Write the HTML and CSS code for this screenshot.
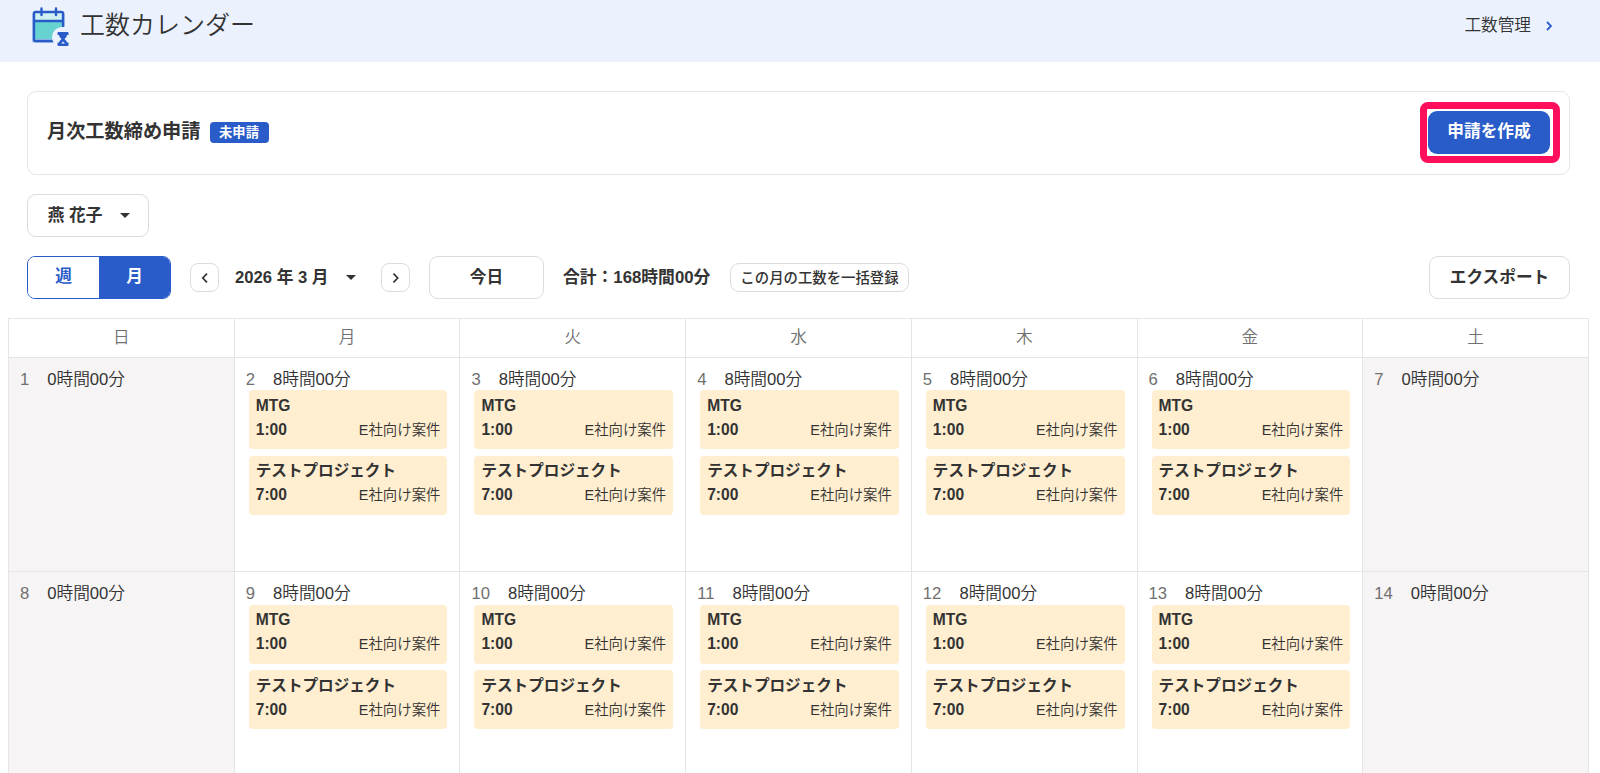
FILE: index.html
```
<!DOCTYPE html>
<html lang="ja">
<head>
    <meta charset="UTF-8">
    <title>工数カレンダー</title>
    <link rel="stylesheet" href="styles.css">
</head>
<body>
    <header class="header">
        <svg class="logo" width="38" height="40" viewBox="0 0 38 40">
            <rect x="0" y="5" width="33" height="31" rx="2" fill="#b4c9f2"/>
            <rect x="2" y="5" width="29" height="9" fill="#d0f1f1"/>
            <rect x="2" y="14" width="29" height="18" fill="#67d3d1"/>
            <path d="M31 19V6.500Q31 5 29.500 5H3.500Q2 5 2 6.500V32.500Q2 34 3.500 34H21M2 14H31M9.500 1.500V8M24 1.500V8" fill="none" stroke="#295bc9" stroke-width="2.400" stroke-linecap="round"/>
            <path d="M34 20H30A10 10 0 0 0 20 30Q20 33 22 37H38V20Z" fill="#ebf2fe"/>
            <path d="M26.500 25H35.500Q36.500 25 36.500 26V28H35Q35 30 32.500 32Q35 34 35 35.500H36.500V38Q36.500 39 35.500 39H26.500Q25.500 39 25.500 38V35.500H27Q27 34 29.500 32Q27 30 27 28H25.500V26Q25.500 25 26.500 25Z" fill="#295bc9"/>
            <path d="M29 36.500L31 34.500L33 36.500Z" fill="#ebf2fe"/>
        </svg>
        <h1>工数カレンダー</h1>
        <a class="header-link">工数管理
            <svg width="6" height="10" viewBox="0 0 6 10"><path d="M1 1L5 5L1 9" fill="none" stroke="#295bc9" stroke-width="1.800"/></svg>
        </a>
    </header>

    <section class="panel">
        <h2>月次工数締め申請</h2>
        <span class="badge">未申請</span>
        <button class="btn primary">申請を作成</button>
    </section>

    <button class="btn user">燕 花子<span class="caret"></span></button>

    <div class="toolbar">
        <div class="toggle">
            <button>週</button>
            <button class="active">月</button>
        </div>
        <button class="arrow"><svg width="7" height="10" viewBox="0 0 7 10"><path d="M6 .7L1.800 5L6 9.300" fill="none" stroke="#333" stroke-width="1.700"/></svg></button>
        <div class="month">2026 年 3 月<span class="caret"></span></div>
        <button class="arrow"><svg width="7" height="10" viewBox="0 0 7 10"><path d="M1.500 .7L5.700 5L1.500 9.300" fill="none" stroke="#333" stroke-width="1.700"/></svg></button>
        <button class="btn today">今日</button>
        <div class="total">合計：168時間00分</div>
        <button class="bulk">この月の工数を一括登録</button>
        <button class="btn export">エクスポート</button>
    </div>

    <div class="calendar">
        <div class="head">日</div>
        <div class="head">月</div>
        <div class="head">火</div>
        <div class="head">水</div>
        <div class="head">木</div>
        <div class="head">金</div>
        <div class="head">土</div>

        <div class="day off"><p><span>1</span>0時間00分</p></div>
        <div class="day">
            <p><span>2</span>8時間00分</p>
            <div class="event"><b>MTG</b><div><b>1:00</b><small>E社向け案件</small></div></div>
            <div class="event"><b>テストプロジェクト</b><div><b>7:00</b><small>E社向け案件</small></div></div>
        </div>
        <div class="day">
            <p><span>3</span>8時間00分</p>
            <div class="event"><b>MTG</b><div><b>1:00</b><small>E社向け案件</small></div></div>
            <div class="event"><b>テストプロジェクト</b><div><b>7:00</b><small>E社向け案件</small></div></div>
        </div>
        <div class="day">
            <p><span>4</span>8時間00分</p>
            <div class="event"><b>MTG</b><div><b>1:00</b><small>E社向け案件</small></div></div>
            <div class="event"><b>テストプロジェクト</b><div><b>7:00</b><small>E社向け案件</small></div></div>
        </div>
        <div class="day">
            <p><span>5</span>8時間00分</p>
            <div class="event"><b>MTG</b><div><b>1:00</b><small>E社向け案件</small></div></div>
            <div class="event"><b>テストプロジェクト</b><div><b>7:00</b><small>E社向け案件</small></div></div>
        </div>
        <div class="day">
            <p><span>6</span>8時間00分</p>
            <div class="event"><b>MTG</b><div><b>1:00</b><small>E社向け案件</small></div></div>
            <div class="event"><b>テストプロジェクト</b><div><b>7:00</b><small>E社向け案件</small></div></div>
        </div>
        <div class="day off"><p><span>7</span>0時間00分</p></div>

        <div class="day off"><p><span>8</span>0時間00分</p></div>
        <div class="day">
            <p><span>9</span>8時間00分</p>
            <div class="event"><b>MTG</b><div><b>1:00</b><small>E社向け案件</small></div></div>
            <div class="event"><b>テストプロジェクト</b><div><b>7:00</b><small>E社向け案件</small></div></div>
        </div>
        <div class="day">
            <p><span>10</span>8時間00分</p>
            <div class="event"><b>MTG</b><div><b>1:00</b><small>E社向け案件</small></div></div>
            <div class="event"><b>テストプロジェクト</b><div><b>7:00</b><small>E社向け案件</small></div></div>
        </div>
        <div class="day">
            <p><span>11</span>8時間00分</p>
            <div class="event"><b>MTG</b><div><b>1:00</b><small>E社向け案件</small></div></div>
            <div class="event"><b>テストプロジェクト</b><div><b>7:00</b><small>E社向け案件</small></div></div>
        </div>
        <div class="day">
            <p><span>12</span>8時間00分</p>
            <div class="event"><b>MTG</b><div><b>1:00</b><small>E社向け案件</small></div></div>
            <div class="event"><b>テストプロジェクト</b><div><b>7:00</b><small>E社向け案件</small></div></div>
        </div>
        <div class="day">
            <p><span>13</span>8時間00分</p>
            <div class="event"><b>MTG</b><div><b>1:00</b><small>E社向け案件</small></div></div>
            <div class="event"><b>テストプロジェクト</b><div><b>7:00</b><small>E社向け案件</small></div></div>
        </div>
        <div class="day off"><p><span>14</span>0時間00分</p></div>
    </div>
</body>
</html>
```
FILE: styles.css
```
* { box-sizing: border-box; }
body { margin: 0; height: 773px; overflow: hidden; background: #fff; color: #333; font: 16.67px/24px "Liberation Sans", "Noto Sans CJK JP", sans-serif; }
h1, h2, p { margin: 0; }
button { font: inherit; color: inherit; font-weight: bold; padding: 0; background: #fff; border: 1px solid #dcdcdc; display: flex; align-items: center; justify-content: center; }

.header { display: flex; height: 62px; padding: 7px 48px 0 32px; background: #ebf2fe; }
.header h1 { margin-left: 10px; font-size: 25px; line-height: 36px; font-weight: 350; }
.header-link { display: flex; align-items: center; gap: 15px; height: 37px; margin-left: auto; font-weight: 350; }

.panel { display: flex; align-items: center; height: 84px; margin: 29px 30px 0 27px; padding: 0 19px 2px; border: 1px solid #e6e6e6; border-radius: 9px; }
.panel h2 { font-size: 19.2px; line-height: 28px; margin-bottom: 1px; }
.badge { margin-left: 9px; width: 59px; height: 21px; border-radius: 4px; background: #295bc9; color: #fff; font-size: 13.3px; line-height: 21px; font-weight: bold; text-align: center; }

.btn { height: 43px; border-radius: 9px; }
.primary { position: relative; width: 122px; margin-left: auto; background: #295bc9; border: none; color: #fff; }
.primary::after { content: ""; position: absolute; inset: -9px -10px -9px -8px; border: 7px solid #ff0f5b; border-radius: 8px; }
.caret { width: 0; height: 0; border: 5.500px solid transparent; border-top-color: #333; border-bottom: 0; }
.user { width: 122px; margin: 19px 0 0 27px; padding-left: 2px; gap: 18px; }

.toolbar { display: flex; align-items: center; margin: 19px 30px 0 27px; }
.toggle { display: flex; width: 144px; height: 43px; border: 1px solid #295bc9; border-radius: 8px; overflow: hidden; }
.toggle button { flex: 1; padding-bottom: 2px; border: none; color: #295bc9; }
.toggle .active { background: #295bc9; color: #fff; }
.arrow { width: 29px; height: 29px; margin-left: 19px; border-radius: 8px; }
.month { display: flex; align-items: center; gap: 17px; width: 127px; margin-left: 16px; font-weight: bold; white-space: nowrap; }
.today { width: 115px; margin-left: 19px; }
.total { margin-left: 19px; width: 148px; font-size: 16.8px; font-weight: bold; white-space: nowrap; }
.bulk { width: 179px; height: 29px; margin-left: 19px; border-radius: 9px; font-size: 14.4px; font-weight: 500; white-space: nowrap; }
.export { width: 141px; margin-left: auto; }

.calendar { display: grid; grid-template-columns: repeat(7, 1fr); grid-template-rows: 39px 214.4px 214.4px; width: 1581px; margin: 19px 0 0 8px; border-top: 1px solid #e5e5e5; border-left: 1px solid #e5e5e5; }
.calendar > div { border-right: 1px solid #e5e5e5; border-bottom: 1px solid #e5e5e5; }
.head { text-align: center; line-height: 37px; color: #707070; font-weight: 350; }
.day { padding: 10px 12px 0 14px; }
.day p { height: 22.4px; margin-left: -3px; font-weight: 350; }
.day p span { margin-right: 18px; color: #707070; }
.off { background: #f6f4f5; }
.event { height: 59px; padding: 3.5px 7px 0; margin-bottom: 6.3px; border-radius: 4px; background: #ffeed0; font-size: 15.6px; }
.event > b { display: block; }
.event div { display: flex; justify-content: space-between; }
.event small { font-size: 14.4px; font-weight: 350; }
```
